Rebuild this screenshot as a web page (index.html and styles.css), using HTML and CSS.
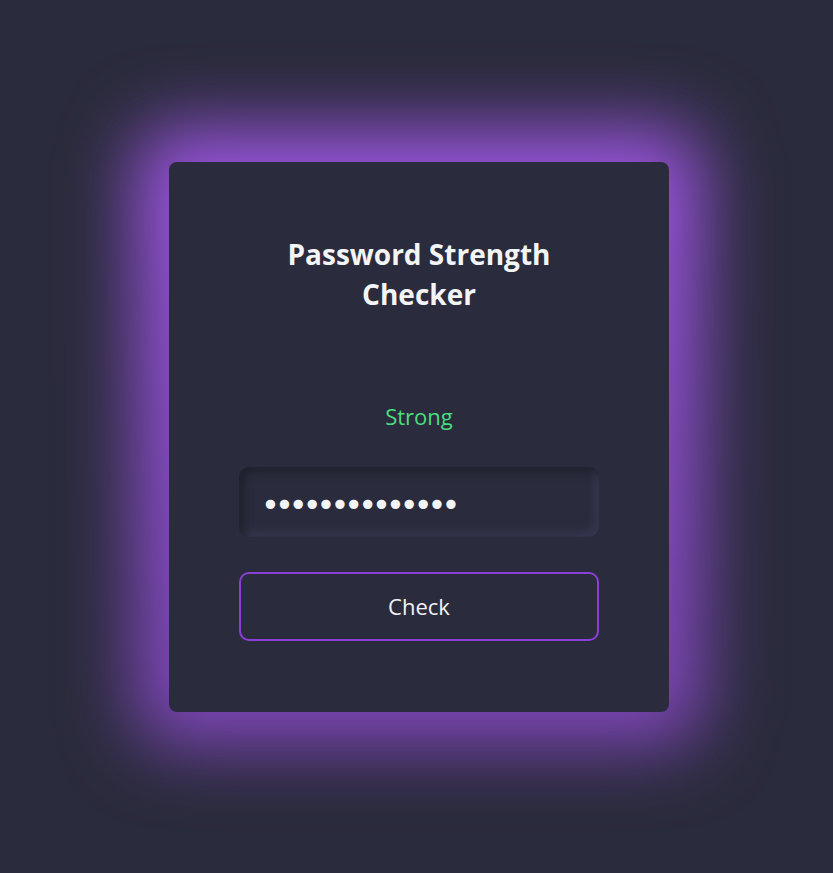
FILE: index.html
```html
<!DOCTYPE html>
<html lang="en">
<head>
<meta charset="utf-8">
<title>Password Strength Checker</title>
<link rel="stylesheet" href="styles.css">
</head>
<body>
<main class="page">
  <section class="card">
    <h1 class="title">Password Strength Checker</h1>
    <p class="strength">Strong</p>
    <input class="field" type="password" value="Secur3Pass!wd9">
    <button class="btn" type="button">Check</button>
  </section>
</main>
</body>
</html>
```

FILE: styles.css
```css
* { box-sizing: border-box; }
html, body { margin: 0; height: 100%; }
body {
  background: #2a2b3c;
  font-family: "Open Sans", "Noto Sans", sans-serif;
  color: #f3f4f6;
}
.page {
  min-height: 100%;
  display: flex;
  align-items: center;
  justify-content: center;
  padding-left: 5px;
}
.card {
  position: relative;
  width: 500px;
  height: 550px;
  padding: 72px 70px 70px;
  background: #2a2b3c;
  border-radius: 8px;
  display: flex;
  flex-direction: column;
  align-items: stretch;
}
.card::before {
  content: "";
  position: absolute;
  inset: -34px;
  z-index: -1;
  border-radius: 36px;
  background: linear-gradient(#9c55e0, #7e46b8);
  filter: blur(36px);
}
.title {
  margin: 0;
  font-size: 28px;
  line-height: 40px;
  font-weight: 700;
  text-align: center;
  padding: 0 20px;
  color: #f3f4f6;
}
.strength {
  margin: 88px 0 0;
  font-size: 22px;
  line-height: 28px;
  text-align: center;
  color: #4ade80;
}
.field {
  margin-top: 37px;
  height: 70px;
  width: 100%;
  border: none;
  outline: none;
  border-radius: 10px;
  background: #2a2b3c;
  padding: 6px 22px 0;
  font-family: "DejaVu Sans", sans-serif;
  font-size: 32px;
  letter-spacing: -5px;
  color: #f3f4f6;
  box-shadow: inset 5px 5px 8px #20212e, inset -5px -5px 8px #363850;
}
.btn {
  margin-top: 35px;
  height: 69px;
  width: 100%;
  border: 2px solid #8b3fd6;
  border-radius: 10px;
  background: #2a2b3c;
  color: #f3f4f6;
  font-family: "Open Sans", "Noto Sans", sans-serif;
  font-size: 22px;
  font-weight: 500;
  cursor: pointer;
}
```
